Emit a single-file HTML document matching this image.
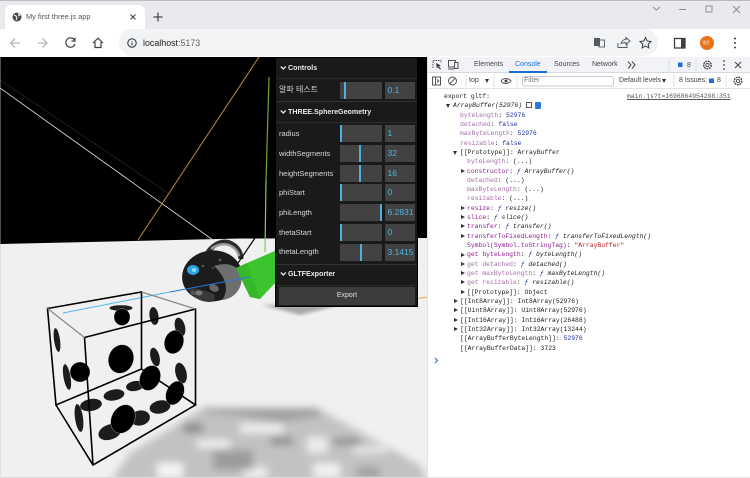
<!DOCTYPE html>
<html><head><meta charset="utf-8"><style>
html,body{margin:0;padding:0;background:#fff}
#r{position:relative;width:750px;height:478px;overflow:hidden;background:#e8eaed;font-family:"Liberation Sans","Noto Sans CJK KR",sans-serif}
#r div,#r svg{position:absolute}
.t{white-space:nowrap}
.c{font:6.4px/9px "Liberation Mono",monospace;white-space:nowrap;color:#222}
.p{color:#a46ea6}.k{color:#8d1d8d}.b{color:#1c2f9c}.r{color:#b3261e}
i{font-style:italic}
.tr{width:0;height:0;border-left:4px solid #333;border-top:2.5px solid transparent;border-bottom:2.5px solid transparent}
.td{width:0;height:0;border-top:4px solid #333;border-left:2.5px solid transparent;border-right:2.5px solid transparent}
.lab{color:#d8d8d8;font-size:7.5px;left:279px;white-space:nowrap;line-height:10px}
.sl{left:340px;width:42px;height:17px;background:#424242}
.bar{width:2px;height:17px;background:#4ab0e2}
.num{left:385px;width:30px;height:17px;background:#424242;color:#4fb3e4;font-size:8.5px;line-height:17px;text-indent:2.5px;overflow:hidden;white-space:nowrap}
.hd{color:#e8e8e8;font-size:7.1px;font-weight:bold;line-height:10px;white-space:nowrap}
.dt{color:#444;font-size:7px;line-height:10px;white-space:nowrap}
</style></head><body><div id="r">
<div style="left:0;top:0;width:750px;height:1px;background:#b9bbbe"></div>
<div style="left:5px;top:5px;width:140px;height:25px;background:#fff;border-radius:6px 6px 0 0"></div>
<svg style="left:12px;top:12px" width="10" height="10" viewBox="0 0 10 10"><circle cx="5" cy="5" r="4.500" fill="#45494e"/><path d="M2 3l2 1 1 2-1 2M6 1l2 2-2 1" stroke="#fff" stroke-width="1" fill="none"/></svg>
<div class="t" style="left:26px;top:12px;font-size:7.400px;line-height:10px;color:#555">My first three.js app</div>
<svg style="left:129px;top:13px" width="8" height="8"><path d="M1.500 1.500l5 5M6.500 1.500l-5 5" stroke="#444" stroke-width="1.100"/></svg>
<svg style="left:153px;top:12px" width="10" height="10"><path d="M5 .5v9M.5 5h9" stroke="#444" stroke-width="1.200"/></svg>
<svg style="left:0;top:0" width="750" height="29" fill="none">
<path d="M653 7l3.500 3 3.500-3" stroke="#85878b" stroke-width=".9"/>
<path d="M679 9.500h7" stroke="#85878b" stroke-width=".9"/>
<rect x="706" y="6" width="6" height="6" stroke="#85878b" stroke-width=".9"/>
<path d="M733 6l7 7M740 6l-7 7" stroke="#85878b" stroke-width=".9"/>
</svg>
<div style="left:0;top:29px;width:750px;height:28px;background:#fff"></div>
<div style="left:119px;top:29px;width:539px;height:27px;border-radius:14px;background:#f1f3f4"></div>
<svg style="left:0;top:29px" width="750" height="28" fill="none">
<path d="M20 14h-9M15 9.500l-4.500 4.500 4.500 4.500" stroke="#b6b8bb" stroke-width="1.300"/>
<path d="M38 14h9M42.500 9.500l4.500 4.500-4.500 4.500" stroke="#b6b8bb" stroke-width="1.300"/>
<path d="M74.500 11a4.700 4.700 0 1 0 .5 4" stroke="#3c4043" stroke-width="1.200"/><path d="M75 8.500v3.500h-3.500" stroke="#3c4043" stroke-width="1.200"/>
<path d="M93 14l5-4.800 5 4.800M95 13v5.500h6v-5.500" stroke="#3c4043" stroke-width="1.200"/>
<circle cx="132" cy="14" r="4.200" stroke="#3c4043" stroke-width="1.100"/><path d="M132 12v.8M132 13.600v2.600" stroke="#3c4043" stroke-width="1.100"/>
<rect x="594" y="9" width="6" height="8" fill="#55585c"/><rect x="599" y="11" width="5.500" height="7" stroke="#55585c" stroke-width=".9"/>
<path d="M618 14v4.500h9v-4.500M621 14.500c.5-2.500 2.500-4 5-4v-2l4 3.500-4 3.500v-2c-2 0-3.500.3-5 1z" stroke="#55585c" stroke-width=".9"/>
<path d="M645.500 8.500l1.700 3.500 3.800.5-2.800 2.600.7 3.800-3.400-1.900-3.400 1.900.7-3.800-2.800-2.600 3.800-.5z" stroke="#3c4043" stroke-width="1"/>
<rect x="674.500" y="9.500" width="10.500" height="9.500" stroke="#3c4043" stroke-width="1.300"/><rect x="681" y="9.500" width="4" height="9.500" fill="#3c4043"/>
<circle cx="707" cy="14" r="7" fill="#e8711a"/>
<circle cx="735" cy="9.500" r="1" fill="#3c4043"/><circle cx="735" cy="14" r="1" fill="#3c4043"/><circle cx="735" cy="18.500" r="1" fill="#3c4043"/>
</svg>
<div class="t" style="left:143px;top:37px;font-size:8.900px;line-height:12px;color:#222">localhost<span style="color:#666">:5173</span></div>
<div class="t" style="left:702.500px;top:40px;font-size:4px;line-height:6px;color:#fff">병준</div>

<svg style="left:0;top:57px" width="428" height="421" viewBox="0 57 428 421">
<defs><filter id="bl" x="-20%" y="-20%" width="140%" height="140%"><feGaussianBlur stdDeviation="4"/></filter><filter id="b2" x="-30%" y="-100%" width="160%" height="300%"><feGaussianBlur stdDeviation="1.500"/></filter></defs>
<rect y="57" width="428" height="421" fill="#f0f0f0"/>
<path d="M0 57H428V238L240 238.500L0 244Z" fill="#000"/>
<path d="M0 80L168 193" stroke="#232323" stroke-width=".8"/>
<path d="M0 88L213 240" stroke="#d5d5d5" stroke-width=".9"/>
<path d="M259 57L138 240" stroke="#bd8a35" stroke-width="1"/>
<path d="M269 77L266 180" stroke="#6fa82e" stroke-width="1.200"/>
<path d="M266 180L265 252" stroke="#7fd050" stroke-width="1.200"/>
<path d="M417 298.500L428 297" stroke="#e0b060" stroke-width="1"/>
<path d="M262 305H340L300 315Z" fill="#a8a8a8" filter="url(#b2)"/>
<g filter="url(#bl)">
<path d="M203 408H317L420 465L428 482H110L130 453L160 435Z" fill="#c2c2c2"/>
<path d="M203 408H317L322 416L280 422L240 416L205 412Z" fill="#a0a0a0"/>
<rect x="240" y="424" width="43" height="9" fill="#f0f0f0"/>
<rect x="197" y="440" width="33" height="8" fill="#f0f0f0"/>
<rect x="307" y="437" width="20" height="16" fill="#ececec"/>
<rect x="157" y="463" width="26" height="15" fill="#f4f4f4"/>
<rect x="243" y="467" width="24" height="11" fill="#f0f0f0"/>
<rect x="313" y="463" width="27" height="15" fill="#f0f0f0"/>
<rect x="353" y="447" width="34" height="6" fill="#ececec"/>
<rect x="183" y="423" width="20" height="10" fill="#8f8f8f"/>
<rect x="270" y="437" width="23" height="8" fill="#8f8f8f"/>
<rect x="333" y="438" width="27" height="7" fill="#8f8f8f"/>
<rect x="213" y="450" width="40" height="20" fill="#9c9c9c"/>
<rect x="357" y="467" width="23" height="11" fill="#a0a0a0"/>
</g>
<g fill="#1c1c1c">
<ellipse cx="57" cy="340" rx="3" ry="12" transform="rotate(-8 57 340)"/>
<ellipse cx="67" cy="377" rx="3.500" ry="13" transform="rotate(-10 67 377)"/>
<ellipse cx="79" cy="418" rx="4" ry="14" transform="rotate(-8 79 418)"/>
<ellipse cx="121" cy="308" rx="11.500" ry="2.800"/>
<ellipse cx="154" cy="316" rx="4.500" ry="9" transform="rotate(-8 154 316)"/>
<ellipse cx="180" cy="327" rx="5" ry="9.500" transform="rotate(-14 180 327)"/>
<ellipse cx="155" cy="357" rx="4.500" ry="9.500" transform="rotate(-14 155 357)"/>
<ellipse cx="181" cy="373" rx="5.500" ry="10.500" transform="rotate(-14 181 373)"/>
<ellipse cx="91" cy="405" rx="11" ry="6" transform="rotate(-10 91 405)"/>
<ellipse cx="114" cy="395" rx="10.500" ry="5.500" transform="rotate(-10 114 395)"/>
<ellipse cx="135" cy="386" rx="9" ry="5" transform="rotate(-10 135 386)"/>
<ellipse cx="160" cy="407" rx="10.500" ry="6.500" transform="rotate(-12 160 407)"/>
<ellipse cx="140" cy="418" rx="10" ry="7.500" transform="rotate(-10 140 418)"/>
<ellipse cx="110" cy="432" rx="12" ry="7.500" transform="rotate(-20 110 432)"/>
</g>
<g fill="#000" stroke="#ddd" stroke-width=".3">
<ellipse cx="122" cy="317" rx="8" ry="8.500"/>
<ellipse cx="174" cy="342" rx="9.500" ry="12" transform="rotate(18 174 342)"/>
<ellipse cx="121" cy="359" rx="12.500" ry="14.500" transform="rotate(20 121 359)"/>
<ellipse cx="80" cy="372" rx="10" ry="10" transform="rotate(15 80 372)"/>
<ellipse cx="150" cy="378" rx="10" ry="13" transform="rotate(25 150 378)"/>
<ellipse cx="175" cy="393" rx="8.500" ry="12.500" transform="rotate(25 175 393)"/>
<ellipse cx="123" cy="419" rx="11.500" ry="15" transform="rotate(28 123 419)"/>
</g>
<path d="M63 313L170 292" stroke="#4fb8ee" stroke-width="1"/>
<g fill="none" stroke="#000" stroke-width="1.600">
<path d="M47.500 308.500L141.500 292V369L56 405ZM56 405L93 465L195.500 405L141.500 369M84.500 337.500L93 465M84.500 337.500L195.500 309L195.500 405"/>
<path d="M141.500 292L195.500 309M47.500 308.500L84.500 337.500" stroke="#8a8a8a" stroke-width="1.300"/>
</g>
<path d="M208 252C214 244 222 240 230 243C237 246 241 252 241 259" fill="none" stroke="#2c2c2c" stroke-width="5"/>
<path d="M211 249C216 245 223 243 229 245C234 247 238 251 239 256" fill="none" stroke="#9a9a9a" stroke-width="2.500"/>
<ellipse cx="212" cy="276" rx="30" ry="25.500" transform="rotate(-8 212 276)" fill="#1c1c1e"/>
<path d="M214 266C226 262 236 264 241 274C244 288 234 299 222 300C229 291 227 278 214 266Z" fill="#6e6e6e"/>
<path d="M188 289C196 287 206 291 214 294C216 299 214 302 210 302C200 302 192 297 188 289Z" fill="#3a3a3a"/>
<ellipse cx="214" cy="288" rx="5" ry="3.500" fill="#666" transform="rotate(25 214 288)"/>
<ellipse cx="199" cy="293" rx="3.500" ry="2.500" fill="#777"/>
<ellipse cx="193" cy="293" rx="2.500" ry="2" fill="#555"/>
<ellipse cx="193" cy="270" rx="6" ry="5" fill="#2aa7e5"/><ellipse cx="194" cy="270" rx="2.200" ry="2" fill="#8fdcff"/>
<circle cx="203" cy="266" r="1.300" fill="#555"/><circle cx="213" cy="268" r="1.300" fill="#444"/><circle cx="220" cy="260" r="1.300" fill="#666"/>
<path d="M255 238L238 263" stroke="#000" stroke-width="1.200"/>
<path d="M236 268L247 263L277 250L278 280L260 299L250 297Z" fill="#3cc42e"/>
<path d="M236 268L247 263L260 299L250 297Z" fill="#36b82a"/>
<path d="M170 292L250 277" stroke="#2a78d8" stroke-width="1"/>
<path d="M0 57V478" stroke="#c4c6c9" stroke-width=".8"/>
</svg>

<div style="left:275px;top:57px;width:143px;height:250px;background:#000"></div>
<div style="left:276px;top:58px;width:141px;height:248px;background:#1a1a1a"></div>
<div style="left:276px;top:78px;width:141px;height:1px;background:#2b2b2b"></div>
<div style="left:276px;top:101px;width:141px;height:1px;background:#333"></div>
<div style="left:276px;top:122px;width:141px;height:1px;background:#2b2b2b"></div>
<div style="left:276px;top:264px;width:141px;height:1px;background:#333"></div>
<div style="left:276px;top:285px;width:141px;height:1px;background:#2b2b2b"></div>
<svg style="left:280px;top:65px" width="7" height="220" fill="none" stroke="#e8e8e8" stroke-width="1.300"><path d="M.8 1.500L3.300 4 5.800 1.500M.8 45.500L3.300 48 5.800 45.500M.8 207.500L3.300 210 5.800 207.500"/></svg>
<div class="hd" style="left:288px;top:63px">Controls</div>
<div class="hd" style="left:288px;top:107px">THREE.SphereGeometry</div>
<div class="hd" style="left:288px;top:269px">GLTFExporter</div>
<div class="lab" style="top:85px;font-size:8px">알파 테스트</div>
<div class="sl" style="top:82px"></div><div class="bar" style="left:344px;top:82px"></div><div class="num" style="top:82px">0.1</div>
<div class="lab" style="top:129px">radius</div>
<div class="sl" style="top:125px"></div><div class="bar" style="left:340px;top:125px"></div><div class="num" style="top:125px">1</div>
<div class="lab" style="top:149px">widthSegments</div>
<div class="sl" style="top:145px"></div><div class="bar" style="left:359px;top:145px"></div><div class="num" style="top:145px">32</div>
<div class="lab" style="top:169px">heightSegments</div>
<div class="sl" style="top:165px"></div><div class="bar" style="left:359px;top:165px"></div><div class="num" style="top:165px">16</div>
<div class="lab" style="top:188px">phiStart</div>
<div class="sl" style="top:184px"></div><div class="bar" style="left:340px;top:184px"></div><div class="num" style="top:184px">0</div>
<div class="lab" style="top:208px">phiLength</div>
<div class="sl" style="top:204px"></div><div class="bar" style="left:380px;top:204px"></div><div class="num" style="top:204px">6.2831</div>
<div class="lab" style="top:228px">thetaStart</div>
<div class="sl" style="top:224px"></div><div class="bar" style="left:340px;top:224px"></div><div class="num" style="top:224px">0</div>
<div class="lab" style="top:247px">thetaLength</div>
<div class="sl" style="top:244px"></div><div class="bar" style="left:360px;top:244px"></div><div class="num" style="top:244px">3.1415</div>
<div style="left:279px;top:287px;width:136px;height:18px;background:#3c3c3c;color:#e0e0e0;font-size:7px;line-height:18px;text-align:center">Export</div>

<div style="left:427px;top:57px;width:1px;height:421px;background:#dfe3ee"></div>
<div style="left:428px;top:57px;width:322px;height:421px;background:#fff"></div>
<div style="left:428px;top:57px;width:322px;height:16px;background:#f1f3f9"></div>
<div style="left:428px;top:72px;width:322px;height:1px;background:#d5d9e2"></div>
<div style="left:428px;top:88px;width:322px;height:1px;background:#dfe2e8"></div>
<div style="left:509px;top:71px;width:38px;height:1.500px;background:#1a6fd0"></div>
<svg style="left:428px;top:57px" width="322" height="31" fill="none" stroke="#444" stroke-width=".9">
<path d="M5 11V3.500h8V6" stroke-dasharray="1.500 1"/><path d="M8 6l5 2.500-2 .8 2 2.500-1 .8-2-2.500-1.200 1.500z" fill="#444" stroke="none"/>
<rect x="20.500" y="3.500" width="7" height="6.500"/><rect x="26.500" y="5.500" width="3.500" height="6" fill="#f1f3f9"/><path d="M20 12h6"/>
<path d="M200 4.500l3 3.500-3 3.500M204 4.500l3 3.500-3 3.500" stroke-width="1"/>
<rect x="250" y="5.500" width="4.500" height="4.500" fill="#1a6fd0" stroke="none"/>
<circle cx="279.500" cy="8" r="1.700"/><circle cx="279.500" cy="8" r="3.800" stroke-width="1.400" stroke-dasharray="1.800 .8"/>
<circle cx="296" cy="4" r=".9" fill="#444" stroke="none"/><circle cx="296" cy="8" r=".9" fill="#444" stroke="none"/><circle cx="296" cy="12" r=".9" fill="#444" stroke="none"/>
<path d="M307 5l6 6M313 5l-6 6" stroke-width="1"/>
<rect x="4.500" y="20" width="8" height="8"/><path d="M7.500 20v8M9 22.500l1.800 1.500L9 25.500"/>
<circle cx="24.500" cy="24" r="4"/><path d="M21.700 26.800l5.600-5.600"/>
<path d="M73 24c2-3.200 7.500-3.200 10 0-2.500 3.200-8 3.200-10 0z"/><circle cx="78" cy="24" r="1.500" fill="#444" stroke="none"/>
<rect x="94.500" y="19.500" width="91" height="9.500" rx="2" stroke="#c5c8ce" fill="#fff"/>
<path d="M38 18v12M66 18v12M89 18v12M246 18v12M298 18v12" stroke="#d5d9e2" stroke-width=".8"/>
<path d="M241 2v12" stroke="#d5d9e2" stroke-width=".8"/><path d="M268 2v12" stroke="#d5d9e2" stroke-width=".8"/>
<rect x="281" y="21.500" width="5" height="4.500" fill="#1a6fd0" stroke="none"/>
<circle cx="310" cy="24" r="1.700"/><circle cx="310" cy="24" r="3.800" stroke-width="1.400" stroke-dasharray="1.800 .8"/>
</svg>
<div class="td" style="left:485px;top:79px"></div>
<div class="td" style="left:662px;top:79px"></div>
<div class="dt" style="left:474px;top:60px">Elements</div>
<div class="dt" style="left:515px;top:60px;color:#1a6fd0">Console</div>
<div class="dt" style="left:554px;top:60px">Sources</div>
<div class="dt" style="left:592px;top:60px">Network</div>
<div class="dt" style="left:687px;top:61px">8</div>
<div class="dt" style="left:469px;top:76px">top</div>
<div class="dt" style="left:524px;top:76px;color:#777">Filter</div>
<div class="dt" style="left:619px;top:76px">Default levels</div>
<div class="dt" style="left:679px;top:76px">8 Issues:</div>
<div class="dt" style="left:717px;top:76px">8</div>

<div class="c" style="left:444px;top:92px">export gltf:</div>
<div class="c" style="left:627px;top:92px;color:#555;text-decoration:underline">main.js?t=1696864954208:351</div>
<div class="td" style="left:446px;top:104px"></div>
<div class="c" style="left:453px;top:101px"><i>ArrayBuffer(52976)</i></div>
<div style="left:526px;top:102px;width:6px;height:6px;border:.8px solid #555;box-sizing:border-box"></div>
<div style="left:535px;top:102px;width:6px;height:7px;background:#2a78d8;border-radius:1px"></div>
<div class="c" style="left:460px;top:111px"><span class="p">byteLength</span>: <span class="b">52976</span></div>
<div class="c" style="left:460px;top:120px"><span class="p">detached</span>: <span class="b">false</span></div>
<div class="c" style="left:460px;top:129px"><span class="p">maxByteLength</span>: <span class="b">52976</span></div>
<div class="c" style="left:460px;top:139px"><span class="p">resizable</span>: <span class="b">false</span></div>
<div class="td" style="left:453px;top:151px"></div>
<div class="c" style="left:460px;top:148px">[[Prototype]]: ArrayBuffer</div>
<div class="c" style="left:467px;top:157px"><span class="p">byteLength</span>: (...)</div>
<div class="tr" style="left:461px;top:169px"></div>
<div class="c" style="left:467px;top:167px"><span class="k">constructor</span>: <i><span class="b">ƒ</span> ArrayBuffer()</i></div>
<div class="c" style="left:467px;top:176px"><span class="p">detached</span>: (...)</div>
<div class="c" style="left:467px;top:185px"><span class="p">maxByteLength</span>: (...)</div>
<div class="c" style="left:467px;top:194px"><span class="p">resizable</span>: (...)</div>
<div class="tr" style="left:461px;top:206px"></div>
<div class="c" style="left:467px;top:204px"><span class="k">resize</span>: <i><span class="b">ƒ</span> resize()</i></div>
<div class="tr" style="left:461px;top:215px"></div>
<div class="c" style="left:467px;top:213px"><span class="k">slice</span>: <i><span class="b">ƒ</span> slice()</i></div>
<div class="tr" style="left:461px;top:224px"></div>
<div class="c" style="left:467px;top:222px"><span class="k">transfer</span>: <i><span class="b">ƒ</span> transfer()</i></div>
<div class="tr" style="left:461px;top:234px"></div>
<div class="c" style="left:467px;top:232px"><span class="k">transferToFixedLength</span>: <i><span class="b">ƒ</span> transferToFixedLength()</i></div>
<div class="c" style="left:467px;top:241px"><span class="k">Symbol(Symbol.toStringTag)</span>: <span class="r">"ArrayBuffer"</span></div>
<div class="tr" style="left:461px;top:253px"></div>
<div class="c" style="left:467px;top:250px"><span class="k">get byteLength</span>: <i><span class="b">ƒ</span> byteLength()</i></div>
<div class="tr" style="left:461px;top:262px"></div>
<div class="c" style="left:467px;top:260px"><span class="p">get detached</span>: <i><span class="b">ƒ</span> detached()</i></div>
<div class="tr" style="left:461px;top:271px"></div>
<div class="c" style="left:467px;top:269px"><span class="p">get maxByteLength</span>: <i><span class="b">ƒ</span> maxByteLength()</i></div>
<div class="tr" style="left:461px;top:280px"></div>
<div class="c" style="left:467px;top:278px"><span class="p">get resizable</span>: <i><span class="b">ƒ</span> resizable()</i></div>
<div class="tr" style="left:461px;top:290px"></div>
<div class="c" style="left:467px;top:288px">[[Prototype]]: Object</div>
<div class="tr" style="left:454px;top:299px"></div>
<div class="c" style="left:460px;top:297px">[[Int8Array]]: Int8Array(52976)</div>
<div class="tr" style="left:454px;top:308px"></div>
<div class="c" style="left:460px;top:306px">[[Uint8Array]]: Uint8Array(52976)</div>
<div class="tr" style="left:454px;top:318px"></div>
<div class="c" style="left:460px;top:316px">[[Int16Array]]: Int16Array(26488)</div>
<div class="tr" style="left:454px;top:327px"></div>
<div class="c" style="left:460px;top:325px">[[Int32Array]]: Int32Array(13244)</div>
<div class="c" style="left:460px;top:334px">[[ArrayBufferByteLength]]: <span class="b">52976</span></div>
<div class="c" style="left:460px;top:344px">[[ArrayBufferData]]: 3723</div>
<svg style="left:434px;top:357px" width="6" height="7" fill="none" stroke="#1a6fd0" stroke-width="1"><path d="M1 1l2.500 2.500L1 6"/></svg>
<div style="left:428px;top:477px;width:322px;height:1px;background:#e5e5e5"></div>
<div style="left:0;top:477px;width:428px;height:1px;background:#dcdcdc"></div>
</div></body></html>
